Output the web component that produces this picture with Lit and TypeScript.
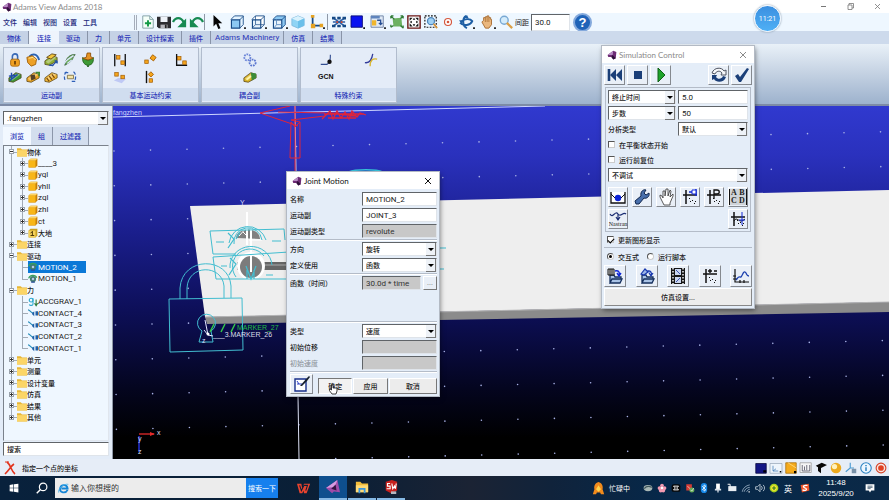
import { LitElement, html, svg, css, TemplateResult, SVGTemplateResult } from "lit";
import { customElement, property, state } from "lit/decorators.js";
import { classMap } from "lit/directives/class-map.js";

const cube = (front: string, top: string) => svg`
  <path d="M1 5L5 1H15V11L11 15" fill="${top}" stroke="#174a86"/>
  <path d="M1.500 5.500H11V15H1.500Z" fill="${front}" stroke="#174a86" stroke-width="1.300"/>
  <path d="M11 5.500L15 1.500" stroke="#174a86"/><path d="M16 14h2v2h-2z" fill="#111"/>`;
const box = (x: number, y: number) => svg`<rect x="${x}" y="${y}" width="4" height="4" fill="#f4a51c" stroke="#a35c00" stroke-width=".8"/>`;
const joint = (body: string, extra: SVGTemplateResult) => svg`
  <path d="M1 9L9 3L15 5L15 9L6 14L1 13Z" fill="${body}" stroke="#4d3a10" stroke-width=".8"/>
  <path d="M2 10L10 4L14 5L5 12Z" fill="#fff" fill-opacity=".35"/>${extra}`;
const plotAxes = svg`<path d="M4 1V15M1 6H15" stroke="#111" stroke-width="1.500"/><path d="M7 9h1v1h-1zM10 11h1v1h-1zM13 12h1v1h-1zM12 14h1v1h-1zM8 12h1v1h-1z" fill="#111"/>`;
const folder = svg`<path d="M3 15V7H7L8 9H14V11M3 15L5 11H15L13 15Z" fill="#a9c3e6" stroke="#16305e" stroke-width="1.300"/>`;

const ICONS: Record<string, SVGTemplateResult> = {
  logo: svg`<path d="M1 8L10 1L15 3L14 13L10 15L7 11L2 11Z" fill="#6d2b74"/><path d="M1 8L10 1L9 8Z" fill="#b78cc4"/><path d="M9 8L14 13L10 15L7 11Z" fill="#2d1038"/>`,
  newfile: svg`<path d="M2 1H10L14 5V15H2Z" fill="#f4fff8" stroke="#7d9aa0"/><path d="M10 1V5H14" fill="none" stroke="#7d9aa0"/><path d="M8 6V13M4.500 9.500H11.500" stroke="#129a45" stroke-width="2.200"/>`,
  save: svg`<path d="M0 2H16V15H2L0 13Z" fill="#2c2c30"/><path d="M4 2H12V8H4Z" fill="#eef2f8"/><path d="M4 11H12V15H4Z" fill="#b6b6bc"/><path d="M9 11h2v4h-2z" fill="#222"/>`,
  redo: svg`<path d="M0 8C3 2 9 2 12 8" fill="none" stroke="#178a52" stroke-width="2.600"/><path d="M15 4V14H5Z" fill="#178a52"/>`,
  undo: svg`<path d="M16 8C13 2 7 2 4 8" fill="none" stroke="#178a52" stroke-width="2.600"/><path d="M1 4V14H11Z" fill="#178a52"/>`,
  cursor: svg`<path d="M4 0V13L7 10L9.500 16L12 15L9.500 9.500H14Z" fill="#050505"/>`,
  cube1: cube("#8cc8f2", "#e3f3ff"),
  cube2: svg`${cube("#e6f2fc", "#fff")}<path d="M5 1V11H15M1 15L5 11" fill="none" stroke="#174a86" stroke-width=".8"/>`,
  cube3: svg`${cube("#e6f2fc", "#8cc8f2")}<path d="M5 5V11H11M2 15L5 11" fill="none" stroke="#5b8bbf"/>`,
  iso: svg`<path d="M8 1L15 4V12L8 15L1 12V4Z" fill="#8fd4f5" stroke="#7fb9dd"/><path d="M1 4L8 7L15 4L8 1Z" fill="#d9f2fd"/><path d="M8 7V15L15 12V4Z" fill="#6bc0ea"/>`,
  axisL: svg`<path d="M4 1V12H13" fill="none" stroke="#174a86" stroke-width="2"/><path d="M2 10h5v5H2zM12 10h4v4h-4zM2 0h4v3H2z" fill="#e6a323"/><path d="M16 14h2v2h-2z" fill="#111"/>`,
  mesh: svg`<path d="M1 3L15 13M1 13L15 3M1 8H15" stroke="#2a5fa8" stroke-width="1.800"/><path d="M0 2h4v3H0zM6 2h4v3H6zM12 2h4v3h-4zM0 11h4v3H0zM6 11h4v3H6zM12 11h4v3h-4z" fill="#174a86"/><path d="M5 7h2v2H5zM10 7h2v2h-2z" fill="#d84a2b"/>`,
  blue: svg`<path d="M1 1H14V14H1Z" fill="#0a12f0" stroke="#0a0a70"/><path d="M15 14h2v2h-2z" fill="#111"/>`,
  layout: svg`<path d="M1 1H15V14H1Z" fill="#dfe9f5" stroke="#6c7fa0"/><path d="M1 1H11V4H1Z" fill="#5e84bd"/><path d="M2 6H7V12H2Z" fill="#f0b62d"/><path d="M8 6H12V11M10 9L12 11L14 9" fill="none" stroke="#274f94" stroke-width="1.500"/><path d="M16 14h2v2h-2z" fill="#111"/>`,
  green: svg`<path d="M3 4L13 3L14 13L4 13Z" fill="#6cb161"/><path d="M1 1L5 5M15 1L12 4M1 14L4 12M15 15L12 12M1 1h3M1 1v3M15 1h-3M15 1v3M1 14v-3M15 15v-3" stroke="#2f7a35" stroke-width="1.500"/>`,
  fit: svg`<path d="M1 1H15V15H1Z" fill="#fff" stroke="#6b1414" stroke-width="1.600"/><path d="M3 3H6.500L3 6.500ZM13 3V6.500L9.500 3ZM3 13V9.500L6.500 13ZM13 13H9.500L13 9.500ZM8 3L9.500 5.500H6.500ZM8 13L6.500 10.500H9.500ZM3 8L5.500 6.500V9.500ZM13 8L10.500 9.500V6.500Z" fill="#111"/>`,
  zoomsel: svg`<rect x="1" y="1" width="13" height="13" fill="none" stroke="#111" stroke-width="1.300" stroke-dasharray="2 1.500"/><circle cx="8" cy="7" r="4" fill="#9fd0f3" stroke="#4d86bd" stroke-width="1.500"/><path d="M11 10L15 15" stroke="#d8953a" stroke-width="2"/>`,
  target: svg`<circle cx="8" cy="8" r="4" fill="#fff" stroke="#d4553c" stroke-width="1.300"/><circle cx="8" cy="8" r="1.500" fill="#d4553c"/>`,
  orbit: svg`<path d="M8 1C3 4 4 13 9 15M1 9C5 13 13 12 15 7C12 3 6 5 3 7" fill="none" stroke="#1e5fa5" stroke-width="2.200"/><path d="M5 3L9 0L11 4ZM0 6L5 6L3 11Z" fill="#1e5fa5"/><path d="M16 14h2v2h-2z" fill="#111"/>`,
  hand: svg`<path d="M2 8L4 6V3H6V2H8V1H10V3H12V5H13V11L10 15H6Z" fill="#eab77e" stroke="#a3672b"/><path d="M6 3V8M8 2V8M10 3V8" stroke="#a3672b" stroke-width=".8"/><path d="M16 14h2v2h-2z" fill="#111"/>`,
  magnify: svg`<circle cx="6" cy="6" r="4.500" fill="#d4ecfb" stroke="#78a8d3" stroke-width="1.600"/><path d="M9 9L15 15" stroke="#dba048" stroke-width="2.600"/>`,
  lock: svg`<path d="M5 8V4C5 0 11 0 11 4V8" fill="none" stroke="#3868b5" stroke-width="1.800"/><rect x="3" y="7" width="10" height="8" rx="2" fill="#f0a020" stroke="#a9670a"/><path d="M8 9V13" stroke="#5c3200" stroke-width="1.800"/>`,
  revolute: svg`<path d="M4 4C8 0 13 1 15 8" fill="none" stroke="#2a63b4" stroke-width="2.200"/><path d="M1 5L7 3L12 7L11 13L6 15L2 11Z" fill="#eda127" stroke="#9c5b06"/><path d="M3 6L8 5L11 8" stroke="#fff0a0" fill="none"/>`,
  translate: joint("#8fae35", svg`<path d="M3 5L9 1L14 2L8 7Z" fill="#f3c43a" stroke="#5b4310"/><path d="M6 14H11M9 15L15 9M15 9V12M15 9H12" stroke="#2452a8" stroke-width="1.500"/>`),
  cylinder: svg`<path d="M2 14C3 5 9 1 14 2C11 4 12 8 7 11Z" fill="#6dae5d" stroke="#3d6440"/><path d="M1 13C3 7 8 6 12 3M5 12L10 8" fill="none" stroke="#dce4fa" stroke-width="1.600"/>`,
  spherical: svg`<path d="M2 5C5 9 11 9 14 5C15 12 11 14 8 14C5 14 1 11 2 5Z" fill="#3e9a36" stroke="#25631f"/><path d="M7 0H11V4L14 6L8 8L2 6L6 5Z" fill="#e79424" stroke="#8e4f05"/><path d="M8 14V16" stroke="#25631f" stroke-width="2"/>`,
  planar: joint("#3f9638", svg`<path d="M1 7L8 6M4 3V10M2 12L11 5" stroke="#1f4cae" stroke-width="1.600"/>`),
  hooke: joint("#eba625", svg`<path d="M5 6L10 5L11 10L6 12Z" fill="#51402a"/><path d="M11 3H15V7" fill="none" stroke="#3e8a34" stroke-width="2"/>`),
  screw: joint("#f2b736", svg`<path d="M3 9L6 13M6 7L9 11M9 5L12 9" stroke="#7b4a08" stroke-width="1.400"/>`),
  general: svg`<path d="M4 2C1 4 1 10 3 13M12 2C15 4 15 10 13 13" fill="none" stroke="#2e5fb8" stroke-width="1.400" stroke-dasharray="4 2"/><path d="M2 3H6M10 13H14" stroke="#2e5fb8" stroke-width="1.400"/><path d="M5 6H12V10H5Z" fill="#f4e3a4" stroke="#7f7145"/>`,
  inline: svg`<path d="M2 1V15M14 1V15" stroke="#111" stroke-width="1.500"/>${box(4, 3)}${box(9, 9)}`,
  orient: svg`${box(2, 8)}<path d="M11 2L15 5L12 9L8 6Z" fill="#f4a51c" stroke="#a35c00"/>`,
  perp: svg`<path d="M3 1V14H15" fill="none" stroke="#111" stroke-width="1.500"/>${box(4, 4)}${box(10, 9)}`,
  inplane: svg`<path d="M1 12L6 9L15 10L10 15Z" fill="#bfc9f5"/>${box(2, 3)}${box(9, 6)}`,
  parallel: svg`<path d="M4 1V15" stroke="#111" stroke-width="1.600"/><path d="M9 2L12 5L9 8L6 5Z" fill="#f4a51c" stroke="#a35c00"/>${box(7, 10)}`,
  gears: svg`<circle cx="5" cy="5" r="3.500" fill="none" stroke="#6d86d8" stroke-width="2" stroke-dasharray="2 1"/><circle cx="11" cy="11" r="3.500" fill="none" stroke="#5a76cf" stroke-width="2" stroke-dasharray="2 1"/>`,
  coupler: joint("#d9b425", svg`<path d="M9 3L15 4V9L10 12Z" fill="#3c8c38"/><path d="M4 11L9 7" stroke="#fff6a8" stroke-width="1.800"/>`),
  ptcurve: svg`<path d="M2 13H9C13 11 13 7 13 2" fill="none" stroke="#344f93" stroke-width="1.300"/><circle cx="12" cy="10" r="2.500" fill="#111"/>`,
  curves: svg`<path d="M1 11C7 12 9 7 10 1" fill="none" stroke="#333c9a" stroke-width="1.500"/><path d="M7 15C7 8 10 6 15 7" fill="none" stroke="#d9b62f" stroke-width="1.500"/>`,
  part: svg`<path d="M1 4L4 1H15V12L12 15H1Z" fill="#c67f05"/><path d="M1 4H12V15H1Z" fill="#f8b617"/><path d="M1 4L4 1H15L12 4Z" fill="#ffd563"/>`,
  ground: svg`<path d="M1 4L4 1H15V12L12 15H1Z" fill="#c8a020"/><path d="M1 4H12V15H1Z" fill="#f6d25a"/><path d="M7 5V12M4 12H10M4 8L7 6" stroke="#453305" stroke-width="1.500"/>`,
  dir: svg`<path d="M0 2H6L8 4H16V15H0Z" fill="#e8b636"/><path d="M0 5H16V15H0Z" fill="#fbd567"/>`,
  motion: svg`<circle cx="8" cy="8" r="5" fill="#447d70"/><circle cx="8" cy="8" r="2" fill="#b6c8e8"/><path d="M1 7C3 1 12 1 14 6" stroke="#3aa05c" stroke-width="2" fill="none"/><path d="M5 13H11" stroke="#2b4e9c" stroke-width="2"/>`,
  gravity: svg`<circle cx="5" cy="5" r="3" fill="none" stroke="#27a7cf" stroke-width="1.700"/><path d="M8 2V11C8 14 3 14 2 12" fill="none" stroke="#27a7cf" stroke-width="1.700"/><path d="M13 4V13M10.500 10L13 14L15.500 10" fill="none" stroke="#2b7c3c" stroke-width="1.700"/>`,
  contact: svg`<path d="M0 3C4 3 3 8 9 8" fill="none" stroke="#2a8ebb" stroke-width="1.800"/><path d="M6 9L10 5V13ZM16 5V12H12V5Z" fill="#1f5fa8"/>`,
  first: svg`<path d="M2 2V14" stroke="#1b3f78" stroke-width="2.600"/><path d="M9 2V14L3 8ZM15 2V14L9 8Z" fill="#1b3f78"/>`,
  stop: svg`<path d="M4 4H12V12H4Z" fill="#1b3f78"/>`,
  play: svg`<path d="M5 1L12 8L5 15Z" fill="#20a32a" stroke="#116016"/>`,
  cycle: svg`<path d="M1 6C3 0 11 0 13 4L15 3V8H10L11 6C9 3 5 4 4 7Z" fill="#f7f8fa" stroke="#4e5360"/><path d="M15 10C13 16 5 16 3 12L1 13V8H6L5 10C7 13 11 12 12 9Z" fill="#1b3f78"/>`,
  check: svg`<path d="M1 9L4 7L6 10L13 1L15 2L7 15H5Z" fill="#1b3f78"/>`,
  basket: svg`<path d="M1 3V14H15V3" fill="#fff" stroke="#111" stroke-width="1.300"/><path d="M1 5L6 10H10L15 5" fill="none" stroke="#111"/><circle cx="8" cy="9" r="3.200" fill="#0b23d8"/>`,
  wrench: svg`<path d="M2 15L1 12L7 7C6 2 10 0 12 1L10 4L12 6L15 4C16 8 12 10 10 9L5 15Z" fill="#486fab" stroke="#10264d"/>`,
  palm: svg`<path d="M2 6L4 7L5 9V2H7V7L8 0H10V7L12 1L13 2L12 8L15 5V7L12 14V16H6L2 8Z" fill="#fff" stroke="#333" stroke-width=".8"/>`,
  plotA: svg`${plotAxes}<path d="M7 3H10M14 0V7" stroke="#1028d8" stroke-width="1.500"/><path d="M10 1h4v4h-4z" fill="#fff" stroke="#1028d8"/>`,
  plotP: svg`${plotAxes}<path d="M8 10V1H11C14 1 14 5 11 5H8" stroke="#111" fill="#e9eef6" stroke-width="1.300"/>`,
  plotPM: svg`${plotAxes}<path d="M6 3H10M8 1V5M12 3H15" stroke="#111" stroke-width="1.400"/>`,
  plotS: svg`${plotAxes}<path d="M4 10C7 4 9 14 15 8" fill="none" stroke="#111"/><path d="M12 1V14M9 9H15" stroke="#1028d8"/>`,
  nastran: svg`<path d="M0 3C3 8 5 -1 8 3C11 7 13 0 16 3M8 3V8M6 6L8 9L10 6" fill="none" stroke="#1b2d73" stroke-width="1.200"/>`,
  store: svg`${folder}<path d="M1 1H7V7H1ZM3 1V7M5 1V7" fill="#ddd" stroke="#111"/><path d="M8 3C12 2 13 5 12 7M10 5L12 8L14 5" fill="none" stroke="#1028d8" stroke-width="1.400"/>`,
  restore: svg`${folder}<path d="M2 6L6 1L9 4L5 7ZM8 3C12 2 13 5 12 7M10 5L12 8L14 5" fill="#9cb6e6" stroke="#1838ae" stroke-width="1.200"/>`,
  film: svg`<path d="M1 0H15V16H1Z" fill="#151515"/><path d="M5 1H11V7H5ZM5 9H11V15H5Z" fill="#cad6ee"/><path d="M3 0V16M13 0V16" stroke="#fff" stroke-width="1.400" stroke-dasharray="1.500 1.500"/><path d="M6 2L10 6M10 10L6 14" stroke="#4159b4"/>`,
  graph: svg`<path d="M2 1V14H16M0 11H4M0 8H3M7 12V15M11 12V15" stroke="#111" stroke-width="1.200" fill="none"/><path d="M3 12C5 10 5 8 7 9C9 10 10 3 12 4C14 5 13 8 16 8" fill="none" stroke="#1b3fae" stroke-width="1.300"/>`,
  edit: svg`<path d="M1 3H12V15H1Z" fill="#fff" stroke="#172f8b" stroke-width="1.400"/><path d="M3 8H8M3 5L5 8" stroke="#2b3fc5"/><path d="M6 10L12 3L15 0L16 1L13 5L8 10Z" fill="#16202e"/>`,
  cancel: svg`<path d="M5 2C9 5 9 11 13 14M12 4C9 6 7 10 3 14" fill="none" stroke="#e2331d" stroke-width="1.600"/><path d="M3 2H7" fill="none" stroke="#e2331d"/>`,
  sNavy: svg`<path d="M1 2H15V15H1Z" fill="#131684" stroke="#090a3c"/><path d="M11 11h4v3h-4z" fill="#000"/>`,
  sAxis: svg`<path d="M0 2H16V15H0Z" fill="#eef5fc" stroke="#9aa8ba"/><path d="M4 5V12H11M4 12L8 9" stroke="#437bb5" fill="none"/><path d="M13 12h2v2h-2z"/>`,
  sGold: svg`<path d="M1 1H15V15H1Z" fill="#f5ab1c" stroke="#a46c09"/><path d="M4 1L15 8" stroke="#ffe093"/><path d="M12 12h3v3h-3z"/>`,
  sGrid: svg`<path d="M0 1H15V14H0Z" fill="#f5f5f5" stroke="#999"/><path d="M3 4V12H13V4M6 6V11M9 4V11" fill="none" stroke="#445"/>`,
  sBlack: svg`<path d="M1 5L9 1L16 4L8 8V15L4 12V7Z" fill="#070707"/>`,
  ball: svg`<circle cx="8" cy="8" r="7" fill="#eba91e"/><circle cx="6" cy="6" r="3.500" fill="#fff1bb"/>`,
  sTree: svg`<path d="M7 1V8L1 13M7 8H12" stroke="#4b9bd2" stroke-width="1.500" fill="none"/><path d="M9 9H15V15H9Z" fill="#7891a8"/>`,
  info: svg`<circle cx="8" cy="8" r="7" fill="#eef7ff" stroke="#2d83c2" stroke-width="1.500"/><path d="M8 7V12M8 4V5.500" stroke="#2d83c2" stroke-width="2"/>`,
  rec: svg`<circle cx="8" cy="8" r="6.500" fill="#f6e7e2" stroke="#d64227" stroke-width="1.500"/><circle cx="8" cy="8" r="3.800" fill="#e04021"/>`,
  windows: svg`<path d="M1 3L7 2V7.500H1ZM8 2L15 1V7.500H8ZM1 8.500H7V14L1 13ZM8 8.500H15V15L8 14Z" fill="#fff"/>`,
  search: svg`<circle cx="9.500" cy="6.500" r="5" fill="none" stroke="#fff" stroke-width="1.600"/><path d="M6 10L1 15" stroke="#fff" stroke-width="1.800"/>`,
  ie: svg`<path d="M14 10C11 16 2 14 3 8C4 2 13 1 14 8H5" fill="none" stroke="#1686d6" stroke-width="2.600"/><path d="M1 14C-1 9 9 0 15 2" fill="none" stroke="#48b4ee" stroke-width="1.200"/>`,
  wps: svg`<path d="M0 3H5L6 9L8 3H15L11 14H8L7.500 11L6 14H3Z" fill="#e8432e"/><path d="M3 5L5 11L8 5H12L10 11" fill="none" stroke="#0a2138" stroke-width="1.200"/>`,
  adams: svg`<path d="M0 9L13 0L16 14L9 13L7 15Z" fill="#a04ba9"/><path d="M0 9L13 0L10 8Z" fill="#d79be0"/><path d="M6 10L11 5L12 12Z" fill="#331441"/>`,
  explorer: svg`<path d="M1 2H6L8 4H15V14H1Z" fill="#f3bd3b"/><path d="M1 6H15V14H1Z" fill="#ffdb76"/><path d="M4 9H12V15H10V11H6V15H4Z" fill="#3d98dc"/>`,
  sw: svg`<path d="M2 2L9 0L15 2V12L8 15L2 12Z" fill="#c7211d"/><path d="M7 4H4V7H7V10H3M9 4L10 10L12 7L13 10L14 4" fill="none" stroke="#fff" stroke-width="1.300"/><path d="M8 13H14V16H8Z" fill="#b8b8c0"/>`,
  flame: svg`<path d="M8 0C12 1 14 5 13 9L15 15H11L10 13H6L5 15H1L3 9C2 5 4 1 8 0Z" fill="#f28a1c"/><path d="M8 4L11 9L8 12L5 9Z" fill="#ffd54f"/>`,
  t0: svg`<ellipse cx="8" cy="8" rx="7" ry="5" fill="#a8b7b5"/><path d="M2 9C6 4 10 5 14 7" stroke="#40575c" stroke-width="2" fill="none"/>`,
  t1: svg`<circle cx="8" cy="4" r="3" fill="#f39ab1"/><circle cx="4" cy="8" r="3" fill="#f39ab1"/><circle cx="12" cy="8" r="3" fill="#f39ab1"/><circle cx="6" cy="12" r="3" fill="#f39ab1"/><circle cx="10" cy="12" r="3" fill="#f39ab1"/><circle cx="8" cy="8" r="2" fill="#fff"/>`,
  t2: svg`<rect x="1" y="2" width="14" height="12" rx="3" fill="#080808"/><path d="M4 5L7 8L4 11M12 5L9 8L12 11M4 5H12M4 11H12" stroke="#fff" fill="none" stroke-width="1.500"/>`,
  t3: svg`<path d="M2 2H11V12H2Z" fill="#d43c35"/><path d="M4 5L9 10" stroke="#fff"/><circle cx="11" cy="11" r="4" fill="#62a856"/><path d="M9 11L11 13L14 8" stroke="#fff" fill="none"/>`,
  t4: svg`<rect x="3" y="0" width="10" height="16" rx="5" fill="#1688e8"/><path d="M5 5L11 11L8 13V3L11 5L5 11" fill="none" stroke="#fff" stroke-width="1.200"/>`,
  t5: svg`<rect x="5" y="1" width="6" height="10" fill="#fff"/><path d="M3 9H13V12H3ZM7 12H9V15H7Z" fill="#d9e1ea"/>`,
  t6: svg`<path d="M2 5H15V13H2Z" fill="#e8edf2"/><path d="M1 2H5V6" fill="none" stroke="#fff" stroke-width="1.500"/>`,
  t7: svg`<path d="M2 14C3 8 8 4 14 3M5 14C6 10 10 7 14 7M9 14C10 12 12 10 14 10" fill="none" stroke="#9eb3c6" stroke-width="1.300"/><path d="M12 13h2v2h-2z" fill="#fff"/>`,
  t8: svg`<path d="M1 6H4L8 2V14L4 10H1Z" fill="none" stroke="#dce6ee" stroke-width="1.200"/><path d="M10 5C12 7 12 9 10 11M13 3C16 6 16 10 13 13" fill="none" stroke="#dce6ee" stroke-width="1.200"/>`,
  t9: svg`<circle cx="8" cy="8" r="7" fill="#a8d31d"/><circle cx="8" cy="8" r="4.500" fill="#ffe636"/><path d="M8 5V11M5 8H11" stroke="#287a23" stroke-width="1.800"/>`,
  sogou: svg`<path d="M1 3L14 1L15 12L3 15Z" fill="#f0562a"/><path d="M12 4C6 3 3 6 8 8C13 10 9 13 4 11" fill="none" stroke="#fff" stroke-width="2"/>`,
  note: svg`<path d="M1 2H15V12H10L8 15L6 12H1Z" fill="#fff"/><path d="M4 5H12M4 7H12M4 9H9" stroke="#0a2744"/>`,
};

const icon = (name: string, size = "") =>
  html`<svg class="ic ${size}" viewBox="0 0 ${size === "wide" ? 18 : 16} 16" aria-hidden="true">${ICONS[name]}</svg>`;

const shared = css`
  * { box-sizing: border-box; }
  button, input, select {
    margin: 0; padding: 0; border: 0; border-radius: 0; background: none;
    font: inherit; color: inherit; min-width: 0; outline: none;
  }
  .ic { width: 14px; height: 14px; display: block; flex: none; overflow: visible; }
  .ic.sm { width: 8px; height: 8px; }
  .ic.tree { width: 10px; height: 10px; }
  .ic.lg { width: 16px; height: 16px; }
  .ic.wide { width: 16px; height: 14px; }
  .field {
    height: 14px; width: 100%; padding: 1px 2px 0 3px; background: #fff; font-size: 8px; font-weight: 400;
    border: 1px solid #dfe4ea; border-top-color: #606468; border-left-color: #606468;
  }
  .combo { position: relative; display: block; min-width: 0; }
  .combo select { appearance: none; font-size: 7px; font-weight: 500; display: block; }
  .combo::after {
    content: ""; position: absolute; right: 1px; top: 1px; width: 9px; height: 12px;
    background: #eef2f7; border-right: 1px solid #777; border-bottom: 1px solid #777;
    pointer-events: none;
  }
  .combo::before {
    content: ""; position: absolute; z-index: 1; right: 3px; top: 6px;
    border: 3px solid transparent; border-top-color: #000; border-bottom-width: 0;
    pointer-events: none;
  }
  .tool {
    display: flex; align-items: center; justify-content: center; height: 20px; width: 20px;
    background: #e9eff7; border: 1px solid #fff; border-right-color: #85898f; border-bottom-color: #85898f;
  }
`;

const combo = (label: string, value: string) => html`
  <span class="combo"><select class="field" aria-label=${label}><option>${value}</option></select></span>`;

@customElement("tool-window")
class ToolWindow extends LitElement {
  @property() heading = "";
  @property({ type: Boolean }) active = false;
  static styles = [shared, css`
    :host { display: flex; flex-direction: column; background: #e4edf8; box-shadow: 0 0 0 1px #b3bac4, 1px 2px 5px #0008; }
    header { display: flex; align-items: center; height: 17px; flex: none; padding: 0 5px; gap: 2px; background: #fff; color: #8a8a8a;
      font: 8px Lato, "Open Sans", sans-serif; }
    header.active { color: #111; }
    .name { flex: 1; }
    .close { width: 10px; height: 10px; }
    .close svg { display: block; width: 8px; height: 8px; }
  `];
  render() {
    return html`<header class=${classMap({ active: this.active })}>
        ${icon("logo", "tree")}<span class="name">${this.heading}</span>
        <button class="close" aria-label="Close"><svg viewBox="0 0 8 8"><path d="M1 1L7 7M7 1L1 7" stroke="currentColor"/></svg></button>
      </header><slot></slot>`;
  }
}

@customElement("joint-motion")
class JointMotion extends LitElement {
  static styles = [shared, css`
    :host { display: block; font-size: 7px; font-weight: 500; }
    .form { display: flex; flex-direction: column; gap: 2px; padding: 3px 2px 2px 3px; }
    .row { display: grid; grid-template-columns: 72px 1fr; align-items: center; height: 14px; }
    .row.fn { grid-template-columns: 72px 59px 1fr; }
    .row.fn .dots { margin-left: 2px; height: 14px; background: #e9eff7; border: 1px solid #fff; border-right-color: #777; border-bottom-color: #777; color: #888; }
    hr { border: 0; border-top: 1px solid #b4bcc8; border-bottom: 1px solid #fff; margin: -1px 0; width: 100%; height: 2px; }
    .off { background: #c8c8c8; color: #333; }
    .space { height: 28px; }
    .dim { color: #9298a0; }
    .actions { display: flex; align-items: flex-end; gap: 1px; }
    .edit { width: 23px; margin-right: 4px; }
    .push { height: 16px; flex: 35; background: #ececec; border: 1px solid #fff; border-right-color: #777; border-bottom-color: #777; }
    .push.down { background: #f2f2f2; border-color: #777 #fff #fff #777; }
    .push.wide { flex: 50; }
  `];
  private text(label: string, id: string, value: string, off = false, dim = false) {
    return html`<div class="row"><label class=${classMap({ dim })} for=${id}>${label}</label>
      <input id=${id} class=${classMap({ field: true, off })} .value=${value} ?readonly=${off}></div>`;
  }
  private pick(label: string, value: string) {
    return html`<label class="row"><span>${label}</span>${combo(label, value)}</label>`;
  }
  render() {
    return html`<tool-window heading="Joint Motion" active><div class="form">
      ${this.text("名称", "name", "MOTION_2")}
      ${this.text("运动副", "joint", "JOINT_3")}
      ${this.text("运动副类型", "kind", "revolute", true)}
      <hr>
      ${this.pick("方向", "旋转")}
      ${this.pick("定义使用", "函数")}
      <hr>
      <div class="row fn"><label for="fn">函数（时间）</label><input id="fn" class="field off" value="30.0d * time"><button class="dots">...</button></div>
      <div class="space"></div>
      <hr>
      ${this.pick("类型", "速度")}
      ${this.text("初始位移", "disp", "", true)}
      ${this.text("初始速度", "vel", "", true, true)}
      <hr>
      <div class="actions"><button class="tool edit" aria-label="编辑">${icon("edit", "lg")}</button>
        <button class="push down">确定</button><button class="push">应用</button><button class="push wide">取消</button></div>
    </div></tool-window>`;
  }
}

@customElement("simulation-control")
class SimulationControl extends LitElement {
  static styles = [shared, css`
    :host { display: block; font-size: 7px; font-weight: 500; }
    .body { padding: 2px; }
    .bar { display: flex; gap: 2px; margin-bottom: 2px; }
    .bar .tool { width: 21px; }
    .fill { flex: 1; }
    .frame { border: 1px solid #b4bcc8; padding: 2px; display: flex; flex-direction: column; gap: 2px; margin: 0 1px; }
    .two { display: grid; grid-template-columns: 68px 1fr; gap: 2px; align-items: center; }
    .opt { display: flex; align-items: center; gap: 4px; height: 13px; }
    .opt input { appearance: none; width: 7px; height: 7px; background: #fff; border: 1px solid #ccc; border-top-color: #555; border-left-color: #555; display: grid; place-items: center; }
    .opt input[type="radio"] { border-radius: 50%; }
    .opt input[type="radio"]:checked::after { content: ""; width: 3px; height: 3px; border-radius: 50%; background: #000; }
    .opt input[type="checkbox"]:checked::after { content: ""; width: 5px; height: 3px; border: 1px solid #000; border-width: 0 0 1px 1px; transform: rotate(-45deg); }
    .grid { display: grid; grid-template-columns: repeat(6, 20px); justify-content: space-between; row-gap: 2px; margin-top: 3px; }
    .last { grid-column: 6; }
    .nas { flex-direction: column; font: 6px/7px "Liberation Serif", serif; }
    .nas .ic { width: 16px; height: 16px; margin-bottom: -6px; }
    .outside { padding: 0 3px; height: 15px; }
    .radios { display: flex; gap: 8px; padding: 0 3px; border-top: 1px solid #b4bcc8; }
    .radios .opt { height: 17px; }
    .line { display: flex; justify-content: space-between; }
    .line .tool { width: 22px; height: 22px; }
    .settings { width: 100%; height: 18px; background: #ececec; border: 1px solid #fff; border-right-color: #888; border-bottom-color: #888; margin-top: 1px; display: block; }
    .abcd { font: bold 8px/8px "Liberation Serif", serif; }
    .matrix { display: grid; grid-template-columns: 8px 8px; border: 1px solid #111; border-width: 0 1px; background: #cfd3d8; }
  `];
  private btn(name: string) { return html`<button class="tool" aria-label=${name}>${icon(name, "lg")}</button>`; }
  render() {
    return html`<tool-window heading="Simulation Control"><div class="body">
      <div class="bar">${["first", "stop", "play"].map((n) => this.btn(n))}<span class="fill"></span>${["cycle", "check"].map((n) => this.btn(n))}</div>
      <div class="frame">
        <div class="two">${combo("终止方式", "终止时间")}<input class="field" aria-label="终止时间" value="5.0">
          ${combo("步长方式", "步数")}<input class="field" aria-label="步数" value="50">
          <span>分析类型</span>${combo("分析类型", "默认")}</div>
        <label class="opt"><input type="checkbox">在平衡状态开始</label>
        <label class="opt"><input type="checkbox">运行前复位</label>
        ${combo("调试", "不调试")}
        <div class="grid">${["basket", "wrench", "palm", "plotA", "plotP"].map((n) => this.btn(n))}
          <button class="tool abcd"><span class="matrix"><span>A</span><span>B</span><span>C</span><span>D</span></span></button>
          <button class="tool nas">${icon("nastran")}Nastran</button>
          <button class="tool last" aria-label="plot">${icon("plotS", "lg")}</button></div>
      </div>
      <label class="opt outside"><input type="checkbox" checked>更新图形显示</label>
      <div class="radios"><label class="opt"><input type="radio" name="m" checked>交互式</label><label class="opt"><input type="radio" name="m">运行脚本</label></div>
      <div class="line">${["store", "restore", "film", "plotPM", "graph"].map((n) => this.btn(n))}</div>
      <button class="settings">仿真设置...</button>
    </div></tool-window>`;
  }
}

@customElement("model-view")
class ModelView extends LitElement {
  static styles = css`
    :host { display: block; overflow: hidden; background: linear-gradient(#3039cf, #2a31bd 14%, #1a1e8c 36%, #0d0f58 58%, #04051f 80%, #000 94%); }
    svg { display: block; width: 100%; height: 100%; }
    text { font-family: "Liberation Sans", sans-serif; font-size: 7px; }
  `;
  render() {
    const dots: SVGTemplateResult[] = [];
    for (let row = 0; row < 10; row++)
      for (let col = 0; col < 22; col++) {
        const x = 114 + col * 36.5 + row * 0.3;
        dots.push(svg`<circle cx="${x}" cy="${151 + row * 34.8 - (x - 114) * 0.025}" r=".8"/>`);
      }
    return html`<svg viewBox="113 106 776 353" preserveAspectRatio="xMinYMin slice">
      <g fill="#a9b2e6">${dots}</g>
      <path d="M113 117L545 106" stroke="#cfd6ff"/>
      <path d="M295 106L296 172M298 396L299 459" stroke="#dde1f5"/>
      <g fill="none" stroke="#e02438" stroke-width="1">
        <path d="M290 106L260 113L298 126M295 106V172M291 122L290 158H300V122L291 120L325 116M278 112L325 113M291 122L295 127L300 122"/>
        <path d="M322 119L330 111L333 119L337 111L341 118L345 112L349 119L352 111L357 117L360 113L366 115M324 114H364M328 118H356M331 113L356 116" stroke-width="1.300"/>
      </g>
      <path d="M348 172C356 169 376 169 383 172" fill="none" stroke="#38c5dd" stroke-width="1.300"/>
      <path d="M190 206L889 190V302L205 317Z" fill="#eeeeee"/>
      <path d="M205 317L889 302V312L207 324Z" fill="#8b8b8b"/>
      <path d="M205 317L889 302" stroke="#b5b5b5"/>
      <path d="M236 238A12 9 0 0 1 260 239Z" fill="#808080"/>
      <path d="M237 262H289V270H237Z" fill="#666"/><path d="M264 265H289" stroke="#aaa"/>
      <circle cx="251" cy="266" r="14" fill="#fff"/><circle cx="251" cy="267" r="11" fill="#7c7c7c"/>
      <path d="M247 212V245M251 228V272" stroke="#fff" stroke-width="2"/>
      <path d="M239 236L247 227M247 236L243 232M249 240H262" stroke="#fff"/>
      <g fill="none" stroke="#42bdd0">
        <path d="M210 231L284 229L285 240M210 231L213 254H236M213 257L216 279H289M213 257L289 252"/>
        <path d="M229 243A19 19 0 0 1 266 240M234 244A14 14 0 0 1 262 240M230 268A21 20 0 0 1 272 265M236 277A17 17 0 0 1 264 256" />
        <path d="M228 233L234 239L228 248M216 242H224M272 241H281M230 258L236 264L229 275M221 266H227M266 275H273M246 266L251 279L256 266M247 270V279M254 270V279M240 232L236 239" stroke-width="1.200"/>
        <path d="M440 248L446 248M440 269H444"/>
        <path d="M169 299L242 298L243 350L170 352ZM180 299V288C182 256 229 256 231 286V298M187 299V288C188 264 222 264 224 286V298"/>
        <path d="M202 331A9 9 0 1 1 211 331L213 342H199Z"/>
      </g>
      <path d="M210 332L214 324M221 332L225 324M231 332L235 324" stroke="#35c84a" stroke-width="1.500"/>
      <text x="237" y="330" fill="#23bf44">MARKER_27</text>
      <text x="213" y="337" fill="#dadde8">___3.MARKER_26</text>
      <path d="M205 320L208 335L213 336M208 335L204 330" stroke="#e4e8ff" fill="none"/>
      <circle cx="208" cy="334" r="1.500" fill="#fff"/>
      <text x="240" y="205" fill="#d7dcff">Y</text><text x="202" y="343" fill="#d7dcff">z</text>
      <text x="113" y="115" fill="#cfd6ff">fangzhen</text>
      <path d="M139 434H154" stroke="#e32b2b" stroke-width="1.300"/><path d="M150 432L155 434L150 436Z" fill="#e32b2b"/>
      <path d="M139 436V452" stroke="#2230d8" stroke-width="1.500"/>
      <text x="157" y="435" fill="#dde">x</text><text x="138" y="441" fill="#dde">y</text><text x="138" y="454" fill="#dde">z</text>
    </svg>`;
  }
}

type Node = { t: string; i: string; d: number; e?: "+" | "-"; last?: boolean };
const TREE: Node[] = [
  { t: "物体", i: "dir", d: 0, e: "-" },
  ...["____3", "yql", "yhll", "zql", "zhl", "ct"].map((t) => ({ t, i: "part", d: 1, e: "+" as const })),
  { t: "大地", i: "ground", d: 1, e: "+", last: true },
  { t: "连接", i: "dir", d: 0, e: "+" },
  { t: "驱动", i: "dir", d: 0, e: "-" },
  { t: "MOTION_2", i: "motion", d: 1 },
  { t: "MOTION_1", i: "motion", d: 1, last: true },
  { t: "力", i: "dir", d: 0, e: "-" },
  { t: "ACCGRAV_1", i: "gravity", d: 1 },
  { t: "CONTACT_4", i: "contact", d: 1 },
  { t: "CONTACT_3", i: "contact", d: 1 },
  { t: "CONTACT_2", i: "contact", d: 1 },
  { t: "CONTACT_1", i: "contact", d: 1, last: true },
  ...["单元", "测量", "设计变量", "仿真", "结果"].map((t) => ({ t, i: "dir", d: 0, e: "+" as const })),
  { t: "其他", i: "dir", d: 0, e: "+", last: true },
];

@customElement("model-browser")
class ModelBrowser extends LitElement {
  @state() private selected = "MOTION_2";
  static styles = [shared, css`
    :host { display: flex; flex-direction: column; padding: 5px 3px 3px; background: #e3ecf8; border-right: 1px solid #8f98a6; }
    .combo select { font-size: 8px; font-weight: 400; }
    .tabs { display: flex; height: 18px; margin-top: 2px; color: #2a35b8; font-size: 7px; font-weight: 500; }
    .tabs button { padding: 0 7px; background: #d3deee; border-right: 1px solid #8c97aa; }
    .tabs .on { background: #f2f8ff; border-right: 0; }
    ul { list-style: none; margin: 0; padding: 0 0 17px 2px; flex: 1; min-height: 0; display: flex; flex-direction: column;
      background: #eff7ff; border: 1px solid #e0e6ee; border-top-color: #7b828c; border-left-color: #7b828c; font-size: 8px; }
    li { flex: 1; max-height: 12px; min-height: 0; display: flex; align-items: center; position: relative; white-space: nowrap; }
    .cell { width: 11px; height: 100%; flex: none; position: relative; display: grid; place-items: center; }
    .cell::before { content: ""; position: absolute; left: 5px; top: 0; bottom: 0; border-left: 1px solid #a3abb5; }
    .cell.end::before { bottom: 50%; }
    .cell.arm::after { content: ""; position: absolute; left: 5px; right: 0; top: 50%; border-top: 1px solid #a3abb5; }
    .exp { position: relative; z-index: 1; width: 5px; height: 5px; }
    .exp svg { display: block; width: 5px; height: 5px; }
    .label { display: flex; align-items: center; height: 100%; padding: 0 1px 0 0; }
    .cn { font-size: 7px; font-weight: 500; }
    .sel { background: #0a78d7; color: #fff; width: 58px; }
    .search { font-size: 7px; margin-top: 1px; font-weight: 500; }
    .search::placeholder { color: #222; }
  `];
  private row(n: Node) {
    const cn = /[^\x00-\x7f]/.test(n.t);
    const exp = n.e ? html`<button class="exp" aria-label="展开"><svg viewBox="0 0 5 5"><rect x=".5" y=".5" width="4" height="4" fill="#fff" stroke="#9aa2ac"/><path d="M1 2.500H4 ${n.e === "+" ? "M2.5 1V4" : ""}" stroke="#333"/></svg></button>` : "";
    return html`<li>
      <span class=${classMap({ cell: true, arm: n.d === 0, end: n.t === "其他" })}>${n.d === 0 ? exp : ""}</span>
      ${n.d ? html`<span class=${classMap({ cell: true, arm: true, end: !!n.last })}>${exp}</span>` : ""}
      <span class=${classMap({ label: true, cn, sel: n.t === this.selected })} @click=${() => (this.selected = n.t)}>${icon(n.i, "tree")}<span>${n.t}</span></span>
    </li>`;
  }
  render() {
    return html`${combo("模型", ".fangzhen")}
      <div class="tabs"><button class="on">浏览</button><button>组</button><button>过滤器</button></div>
      <ul>${TREE.map((n) => this.row(n))}</ul>
      <input class="field search" aria-label="搜索" placeholder="搜索">`;
  }
}

const MENUS = ["文件", "编辑", "视图", "设置", "工具"];
const TABS = ["物体", "连接", "驱动", "力", "单元", "设计探索", "插件", "Adams Machinery", "仿真", "结果"];
const TOOLS: [string, string][] = [
  ["newfile", "w16"], ["save", "w16"], ["redo", "w16"], ["undo", "w16"], ["|", ""],
  ["cursor", "w21"], ["cube1", "w21"], ["cube2", "w21"], ["cube3", "w21"], ["iso", "w16"], ["axisL", "w21"], ["|", ""],
  ["mesh", "w19"], ["blue", "w19"], ["layout", "w21"], ["green", "w17"], ["fit", "w17"], ["zoomsel", "w17"],
  ["target", "w17"], ["orbit", "w21"], ["hand", "w21"], ["magnify", "w16"],
];
const GROUPS: { name: string; cols: string; icons: string[] }[] = [
  { name: "运动副", cols: "c5", icons: ["lock", "revolute", "translate", "cylinder", "spherical", "planar", "hooke", "screw", "general"] },
  { name: "基本运动约束", cols: "c3", icons: ["inline", "orient", "perp", "inplane", "parallel"] },
  { name: "耦合副", cols: "c1", icons: ["gears", "coupler"] },
  { name: "特殊约束", cols: "c2", icons: ["ptcurve", "curves", "GCN"] },
];
const STATUS = ["sNavy", "sAxis", "sGold", "sGrid", "sBlack", "ball", "sTree", "info", "rec"];

@customElement("app-root")
class AppRoot extends LitElement {
  @state() private tab = "连接";
  static styles = [shared, css`
    :host {
      display: flex; flex-direction: column; height: 100vh; position: relative; overflow: hidden; color: #222;
      font: 8px Roboto, "Liberation Sans", "Noto Sans CJK SC", sans-serif;
    }
    .title { display: flex; align-items: center; height: 13px; padding: 0 8px 0 2px; gap: 1px; background: #fff; color: #8b8b8b; flex: none;
      font: 8px Lato, "Open Sans", sans-serif; }
    .title .text { flex: 1; }
    .win { display: flex; gap: 20px; }
    .win svg { display: block; width: 7px; height: 7px; }
    .strip { display: flex; align-items: center; height: 18px; background: #eef7ff; flex: none; }
    nav { display: flex; gap: 6px; padding-left: 3px; width: 134px; font-size: 7px; font-weight: 500; color: #1d2a7c; }
    nav a { color: inherit; text-decoration: none; }
    .grip { width: 3px; height: 15px; border: 1px solid #a5adba; border-width: 0 1px; margin-right: 3px; }
    .cell { display: flex; justify-content: center; height: 16px; align-items: center; }
    .w16 { width: 16px; } .w17 { width: 17px; } .w19 { width: 19px; } .w21 { width: 21px; }
    .sep { width: 2px; height: 16px; border-left: 1px solid #8f98a6; }
    .gap { display: flex; align-items: center; gap: 2px; font-size: 7px; margin-left: 1px; }
    .gap input { width: 39px; height: 17px; }
    .help { width: 19px; height: 19px; border-radius: 50%; background: #1f63b8; border: 2px solid #84a9dc; color: #fff; font: bold 13px/13px "Liberation Sans", sans-serif; margin-left: 3px; }
    .tabs { display: flex; height: 13px; background: #cddaec; flex: none; }
    .tabs button { padding: 0 7px; color: #2a35b8; font-size: 7px; font-weight: 500; border-right: 1px solid #8994a8; background: #c5d2e6; }
    .tabs .latin { font-size: 8px; font-weight: 400; padding: 0 4px; }
    .tabs .on { background: #eef4fc; border-right: 0; padding: 0 8px; }
    .ribbon { display: flex; gap: 2px; padding: 3px; height: 62px; flex: none; background: linear-gradient(#e9f1f8, #c7d4e4 45%, #9db2cd); border-bottom: 2px solid #7d8ba6; }
    .group { width: 97px; height: 56px; display: flex; flex-direction: column; background: #e4ecf8; border: 1px solid #b1bccd; padding-bottom: 1px; }
    .icons { flex: 1; display: grid; grid-auto-rows: 17px; justify-items: center; align-items: center; padding: 3px 2px 0; }
    .c5 { grid-template-columns: repeat(5, 1fr); } .c3 { grid-template-columns: repeat(3, 1fr); }
    .c2 { grid-template-columns: repeat(2, 1fr); } .c1 { grid-template-columns: 1fr; }
    .gcn { font: bold 7px "Liberation Sans", sans-serif; color: #111; }
    .caption { height: 13px; display: grid; place-items: center; background: #d0ddef; color: #2a35b8; font-size: 7px; font-weight: 500; }
    main { flex: 1; min-height: 0; display: flex; }
    model-browser { width: 113px; flex: none; }
    model-view { flex: 1; min-width: 0; }
    joint-motion { position: absolute; left: 287px; top: 172px; width: 152px; }
    simulation-control { position: absolute; left: 602px; top: 46px; width: 152px; }
    .clock { position: absolute; left: 754px; top: 5px; width: 27px; height: 27px; border-radius: 50%; border: 1px solid #f2f8ff;
      background: linear-gradient(#3b8fe0, #4fb0f5); color: #fff; display: grid; place-items: center; box-shadow: 0 0 2px #789; font-size: 7px; }
    .pointer { position: absolute; left: 329px; top: 384px; }
    .pointer svg { width: 9px; height: 11px; display: block; }
    .status { display: flex; align-items: center; height: 17px; flex: none; background: #e6edf7; padding: 0 2px; gap: 4px; font-size: 7px; font-weight: 500; }
    .status .text { flex: 1; }
    .marks { display: flex; gap: 3px; }
    .marks .ic { width: 12px; height: 12px; }
    .tray .ic { width: 10px; height: 10px; }
    .taskbar { display: flex; align-items: center; height: 24px; flex: none; background: linear-gradient(90deg, #08213c, #0a1f36 38%, #1b2334 53%, #10233b 62%, #06284a 75%, #0b2947); color: #fff; }
    .start { width: 28px; display: grid; place-items: center; } .start .ic { width: 10px; height: 10px; }
    .find { width: 27px; display: grid; place-items: center; } .find .ic { width: 12px; height: 12px; }
    .query { display: flex; align-items: center; gap: 2px; height: 20px; width: 191px; background: #ececec; color: #333; padding-left: 3px; }
    .query .ic { width: 11px; height: 11px; }
    .query input { flex: 1; font-size: 8px; } .query input::placeholder { color: #333; }
    .go { width: 32px; height: 20px; background: #1680ee; font-size: 7px; }
    .apps { display: flex; gap: 1px; height: 24px; margin-left: 12px; }
    .apps button { width: 28px; display: grid; place-items: center; }
    .apps .on { background: #0e4f8e; }
    .apps .run { border-bottom: 2px solid #86b9e4; }
    .tray { display: flex; align-items: center; gap: 4px; margin-left: auto; padding-right: 14px; font-size: 7px; }
    .busy { display: flex; align-items: center; gap: 4px; margin-right: 9px; }
    .busy .ic { width: 13px; height: 13px; }
    .ime { font-size: 8px; width: 10px; margin: 0 3px 0 0; text-align: center; }
    .when { width: 40px; margin-left: 2px; text-align: center; font: 8px/11px "Liberation Sans", sans-serif; }
    .tray .note { display: flex; margin-left: 5px; }
  `];
  render(): TemplateResult {
    return html`
      <div class="title">${icon("logo", "tree")}<span class="text">Adams View Adams 2018</span>
        <span class="win">
          <button aria-label="最小化"><svg viewBox="0 0 7 7"><path d="M1 3.500H6" stroke="#777"/></svg></button>
          <button aria-label="还原"><svg viewBox="0 0 7 7"><path d="M1 2H5V6.500H1ZM2 2V.500H6.500V5H5" fill="none" stroke="#777" stroke-width=".8"/></svg></button>
          <button aria-label="关闭"><svg viewBox="0 0 7 7"><path d="M1 1L6 6M6 1L1 6" stroke="#777" stroke-width=".8"/></svg></button>
        </span></div>
      <div class="strip"><nav>${MENUS.map((m) => html`<a href="#">${m}</a>`)}</nav><span class="grip"></span>
        ${TOOLS.map(([n, w]) => n === "|" ? html`<span class="sep"></span>` : html`<button class="cell ${w}" aria-label=${n}>${icon(n, /cube|axisL|blue|layout|orbit|hand/.test(n) ? "wide" : "")}</button>`)}
        <label class="gap">间距<input class="field" value="30.0"></label><button class="help">?</button></div>
      <div class="tabs">${TABS.map((t) => html`<button class=${classMap({ on: t === this.tab, latin: t.startsWith("A") })} @click=${() => (this.tab = t)}>${t}</button>`)}</div>
      <div class="ribbon">${GROUPS.map((g) => html`<section class="group"><div class="icons ${g.cols}">
        ${g.icons.map((i) => i === "GCN" ? html`<span class="gcn">GCN</span>` : icon(i))}</div><div class="caption">${g.name}</div></section>`)}</div>
      <main><model-browser></model-browser><model-view></model-view></main>
      <div class="status">${icon("cancel", "lg")}<span class="text">指定一个点的坐标</span><span class="marks">${STATUS.map((s) => icon(s))}</span></div>
      <div class="taskbar">
        <button class="start" aria-label="开始">${icon("windows")}</button><button class="find" aria-label="搜索">${icon("search")}</button>
        <label class="query">${icon("ie")}<input aria-label="搜索" placeholder="输入你想搜的"></label><button class="go">搜索一下</button>
        <div class="apps"><button aria-label="WPS">${icon("wps")}</button><button class="on run" aria-label="Adams">${icon("adams")}</button>
          <button class="run" aria-label="文件夹">${icon("explorer")}</button><button class="run" aria-label="SW">${icon("sw")}</button></div>
        <div class="tray"><span class="busy">${icon("flame")}忙碌中</span>
          ${[0, 1, 2, 3, 4, 5, 6, 7, 8, 9].map((n) => icon("t" + n))}<span class="ime">英</span>${icon("sogou")}
          <span class="when">11:48<br>2025/9/20</span><span class="note">${icon("note")}</span></div>
      </div>
      <joint-motion></joint-motion><simulation-control></simulation-control>
      <div class="clock">11:21</div>
      <span class="pointer"><svg viewBox="0 0 9 11"><path d="M3 10L0 6L1 5L2.500 6V1H4V4H8V7L7 10Z" fill="#fff" stroke="#111" stroke-width=".8"/></svg></span>`;
  }
}
